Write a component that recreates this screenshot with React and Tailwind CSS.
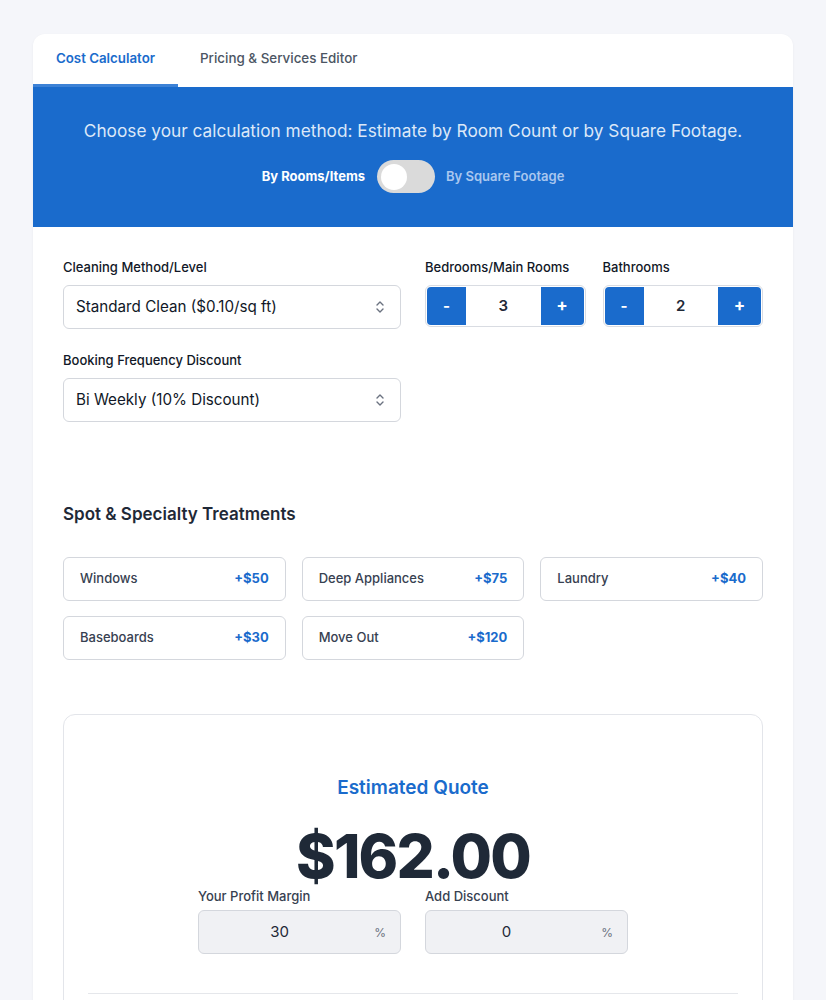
import React from "react";

function UpDown() {
  return (
    <svg width="10" height="14" viewBox="0 0 10 14" fill="none" stroke="#6b7280" strokeWidth="1.4" strokeLinecap="round" strokeLinejoin="round">
      <path d="M2 5 L5 2 L8 5" />
      <path d="M2 9 L5 12 L8 9" />
    </svg>
  );
}

function Select({ value }) {
  return (
    <div className="flex h-[44px] items-center justify-between rounded-md border border-[#d4d7dd] bg-white pl-[12px] pr-[15px]">
      <span className="text-[15.2px] text-[#111827]">{value}</span>
      <UpDown />
    </div>
  );
}

function Counter({ value }) {
  return (
    <div className="flex h-[42px] rounded-md border border-[#d9dce2] bg-white p-px">
      <div className="flex w-[39px] items-center justify-center rounded-l-[4px] bg-[#1a6bcc] text-[15px] font-bold text-white">-</div>
      <div className="flex flex-1 items-center justify-center text-[15px] font-semibold text-[#1f2937]">{value}</div>
      <div className="flex w-[43px] items-center justify-center rounded-r-[4px] bg-[#1a6bcc] text-[17px] font-bold text-white">+</div>
    </div>
  );
}

function Label({ children }) {
  return <div className="mb-[8px] text-[13px] font-medium leading-[20px] text-[#111827]">{children}</div>;
}

function Treatment({ name, price }) {
  return (
    <div className="flex h-[44px] items-center justify-between rounded-md border border-[#d4d7dd] bg-white px-[16px]">
      <span className="text-[13px] font-medium text-[#374151]">{name}</span>
      <span className="text-[13px] font-bold text-[#1a6bcc]">{price}</span>
    </div>
  );
}

function PctInput({ value }) {
  return (
    <div className="relative flex h-[44px] items-center rounded-md border border-[#d4d7dd] bg-[#f0f1f4] pr-[40px] pt-px">
      <span className="flex-1 text-center text-[15px] text-[#1f2937]">{value}</span>
      <span className="absolute right-[14px] text-[12px] text-[#6b7280]">%</span>
    </div>
  );
}

export default function App() {
  return (
    <div className="min-h-screen bg-[#f5f6fa] px-[33px] pt-[34px]" style={{ fontFamily: "Inter, 'Noto Sans', sans-serif" }}>
      <div className="w-[760px] overflow-hidden rounded-xl bg-white shadow-[0_1px_3px_rgba(0,0,0,0.05)]">
        {/* Tabs */}
        <div className="flex h-[53px]">
          <div className="flex w-[145px] items-center justify-center border-b-[3px] border-[#3d82d6] text-[13.3px] font-semibold text-[#1a6bcc]">
            Cost Calculator
          </div>
          <div className="flex items-center px-[22px] pb-[5px] text-[13.4px] font-medium text-[#4b5563]">
            Pricing &amp; Services Editor
          </div>
        </div>

        {/* Banner */}
        <div className="flex h-[140px] flex-col items-center bg-[#1a6bcc] pt-[32px]">
          <p className="text-[17.25px] leading-[24px] text-[#dce8f8]">
            Choose your calculation method: Estimate by Room Count or by Square Footage.
          </p>
          <div className="mt-[17px] flex items-center">
            <span className="text-[13px] font-bold text-white">By Rooms/Items</span>
            <div className="ml-[12px] flex h-[33px] w-[58px] items-center rounded-full bg-[#dadada] px-[4px]">
              <div className="h-[26px] w-[26px] rounded-full bg-white" />
            </div>
            <span className="ml-[11px] text-[13px] font-semibold text-[#a9c7ef]">By Square Footage</span>
          </div>
        </div>

        {/* Form */}
        <div className="px-[30px] pt-[30px]">
          <div className="grid grid-cols-2 gap-x-[24px]">
            <div>
              <Label>Cleaning Method/Level</Label>
              <Select value="Standard Clean ($0.10/sq ft)" />
            </div>
            <div className="grid grid-cols-2 gap-x-[17px]">
              <div>
                <Label>Bedrooms/Main Rooms</Label>
                <Counter value="3" />
              </div>
              <div>
                <Label>Bathrooms</Label>
                <Counter value="2" />
              </div>
            </div>
            <div className="mt-[21px]">
              <Label>Booking Frequency Discount</Label>
              <Select value="Bi Weekly (10% Discount)" />
            </div>
          </div>

          <h2 className="mt-[80px] text-[17px] font-semibold leading-[24px] text-[#1f2937]">
            Spot &amp; Specialty Treatments
          </h2>
          <div className="mt-[31px] grid grid-cols-3 gap-x-[16px] gap-y-[15px]">
            <Treatment name="Windows" price="+$50" />
            <Treatment name="Deep Appliances" price="+$75" />
            <Treatment name="Laundry" price="+$40" />
            <Treatment name="Baseboards" price="+$30" />
            <Treatment name="Move Out" price="+$120" />
          </div>

          {/* Quote */}
          <div className="mt-[54px] rounded-xl border border-[#e3e5ea] px-[24px] pt-[59px] pb-[40px]">
            <div className="flex flex-col items-center">
              <div className="text-[19px] font-semibold leading-[28px] text-[#1a6bcc]">Estimated Quote</div>
              <div className="mt-[24px] text-[60px] font-extrabold leading-[60px] tracking-[-0.03em] text-[#1f2937]">$162.00</div>
              <div className="grid w-[430px] grid-cols-2 gap-x-[24px]">
                <div>
                  <div className="mb-[4px] text-[13px] font-medium leading-[20px] text-[#374151]">Your Profit Margin</div>
                  <PctInput value="30" />
                </div>
                <div>
                  <div className="mb-[4px] text-[13px] font-medium leading-[20px] text-[#374151]">Add Discount</div>
                  <PctInput value="0" />
                </div>
              </div>
            </div>
            <div className="mt-[39px] border-t border-[#e5e7eb]" />
            <div className="h-[200px]" />
          </div>
          <div className="h-[40px]" />
        </div>
      </div>
    </div>
  );
}
